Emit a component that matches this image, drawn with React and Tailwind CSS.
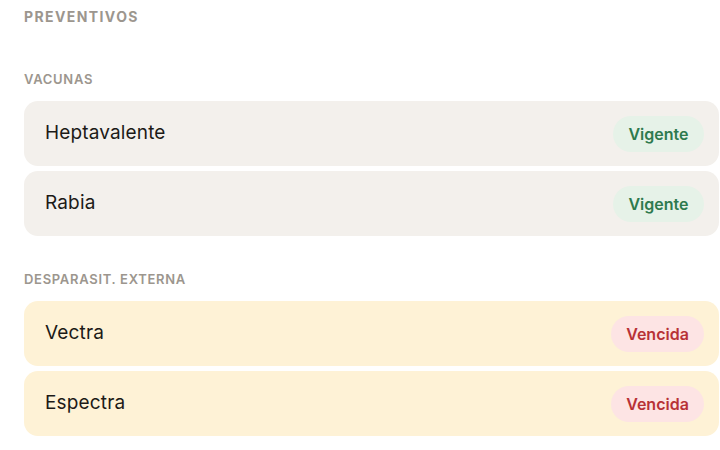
import React from 'react';

const groups = [
  {
    title: 'Vacunas',
    tone: 'ok',
    items: [
      { name: 'Heptavalente', status: 'Vigente' },
      { name: 'Rabia', status: 'Vigente' },
    ],
  },
  {
    title: 'Desparasit. externa',
    tone: 'late',
    items: [
      { name: 'Vectra', status: 'Vencida' },
      { name: 'Espectra', status: 'Vencida' },
    ],
  },
];

const Row = ({ name, status, tone }) => (
  <div
    className={`h-[65px] rounded-[14px] flex items-center justify-between pl-[21px] pr-[15px] ${
      tone === 'ok' ? 'bg-[#f3f0ec]' : 'bg-[#fef2d6]'
    }`}
  >
    <span className="text-[19px] text-[#1c1a17] tracking-[0.15px]">{name}</span>
    <span
      className={`h-[36px] rounded-full flex items-center justify-center text-[16px] font-semibold ${
        tone === 'ok'
          ? 'w-[91px] bg-[#e6f2e8] text-[#2e7a4e]'
          : 'w-[93px] bg-[#fde4e4] text-[#b83236]'
      }`}
    >
      {status}
    </span>
  </div>
);

export default function App() {
  return (
    <div
      className="min-h-screen bg-white pl-6 pr-[1px] pt-[9px]"
      style={{ fontFamily: 'Inter, "Noto Sans", sans-serif' }}
    >
      <h1 className="text-[14px] leading-[16px] font-bold uppercase tracking-[1.4px] text-[#9c968e]">
        Preventivos
      </h1>

      {groups.map((g, i) => (
        <section key={g.title} className={i === 0 ? 'mt-[47px]' : 'mt-[36px]'}>
          <h2 className="text-[13px] leading-[15px] font-semibold uppercase tracking-[0.7px] text-[#9c968e] mb-[14px]">
            {g.title}
          </h2>
          <div className="flex flex-col gap-[5px]">
            {g.items.map((it) => (
              <Row key={it.name} name={it.name} status={it.status} tone={g.tone} />
            ))}
          </div>
        </section>
      ))}
    </div>
  );
}
